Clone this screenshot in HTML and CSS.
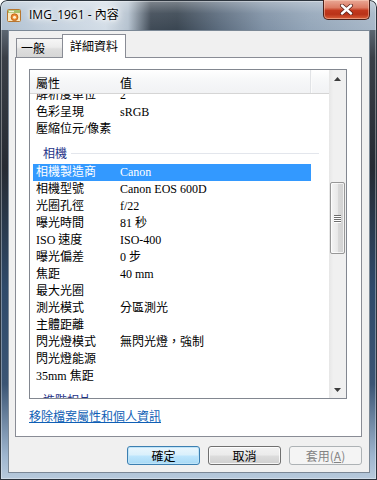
FILE: index.html
```html
<!DOCTYPE html>
<html>
<head>
<meta charset="utf-8">
<link rel="stylesheet" href="styles.css">
</head>
<body>
<div class="window">
  <div class="titlebar">
    <svg class="app-icon" width="16" height="16" viewBox="0 0 16 16">
      <rect x="1.5" y="2.5" width="13" height="12" rx="1" fill="#fbe9bf" stroke="#b7762f"/>
      <rect x="2" y="3" width="12" height="3" fill="#a9c06c"/>
      <rect x="3" y="3.8" width="5" height="1.4" fill="#f4f0d8"/>
      <circle cx="8.5" cy="10.2" r="3.4" fill="#ec8a2e" stroke="#b65a14" stroke-width="0.8"/>
      <circle cx="8.5" cy="10.2" r="1.5" fill="#fff2d2"/>
    </svg>
    <span class="title">IMG_1961 - 內容</span>
    <div class="close">
      <svg width="15" height="11" viewBox="0 0 15 11">
        <path d="M3 1.5 L12 9.5 M12 1.5 L3 9.5" stroke="#5a2219" stroke-width="4" stroke-linecap="round"/>
        <path d="M3 1.5 L12 9.5 M12 1.5 L3 9.5" stroke="#ffffff" stroke-width="2.4" stroke-linecap="round"/>
      </svg>
    </div>
  </div>
  <div class="client">
    <div class="tabs">
      <div class="tab">一般</div>
      <div class="tab tab-active">詳細資料</div>
    </div>
    <div class="panel">
      <div class="listview">
        <div class="lv-main">
          <div class="lv-header">
            <div class="hcol hcol-name">屬性</div>
            <div class="hcol hcol-value">值</div>
            <div class="hcol hcol-rest"></div>
          </div>
          <div class="lv-body">
            <div class="lv-rows">
              <div class="row"><span class="c-name">解析度單位</span><span class="c-val">2</span></div>
              <div class="row"><span class="c-name">色彩呈現</span><span class="c-val">sRGB</span></div>
              <div class="row"><span class="c-name">壓縮位元/像素</span><span class="c-val"></span></div>
              <div class="group"><span class="group-label">相機</span><span class="group-line"></span></div>
              <div class="row row-selected"><span class="c-name">相機製造商</span><span class="c-val">Canon</span></div>
              <div class="row"><span class="c-name">相機型號</span><span class="c-val">Canon EOS 600D</span></div>
              <div class="row"><span class="c-name">光圈孔徑</span><span class="c-val">f/22</span></div>
              <div class="row"><span class="c-name">曝光時間</span><span class="c-val">81 秒</span></div>
              <div class="row"><span class="c-name">ISO 速度</span><span class="c-val">ISO-400</span></div>
              <div class="row"><span class="c-name">曝光偏差</span><span class="c-val">0 步</span></div>
              <div class="row"><span class="c-name">焦距</span><span class="c-val">40 mm</span></div>
              <div class="row"><span class="c-name">最大光圈</span><span class="c-val"></span></div>
              <div class="row"><span class="c-name">測光模式</span><span class="c-val">分區測光</span></div>
              <div class="row"><span class="c-name">主體距離</span><span class="c-val"></span></div>
              <div class="row"><span class="c-name">閃光燈模式</span><span class="c-val">無閃光燈，強制</span></div>
              <div class="row"><span class="c-name">閃光燈能源</span><span class="c-val"></span></div>
              <div class="row"><span class="c-name">35mm 焦距</span><span class="c-val"></span></div>
              <div class="group"><span class="group-label">進階相片</span><span class="group-line"></span></div>
            </div>
          </div>
        </div>
        <div class="scrollbar">
          <div class="sb-btn">
            <svg width="7" height="4" viewBox="0 0 7 4"><path d="M0 4 L3.5 0 L7 4 Z" fill="#3c3c3c"/></svg>
          </div>
          <div class="sb-track">
            <div class="sb-thumb">
              <span class="grip"></span><span class="grip"></span><span class="grip"></span><span class="grip"></span>
            </div>
          </div>
          <div class="sb-btn">
            <svg width="7" height="4" viewBox="0 0 7 4"><path d="M0 0 L7 0 L3.5 4 Z" fill="#3c3c3c"/></svg>
          </div>
        </div>
      </div>
      <a class="link" href="#">移除檔案屬性和個人資訊</a>
    </div>
    <div class="buttons">
      <div class="btn btn-default">確定</div>
      <div class="btn">取消</div>
      <div class="btn btn-disabled">套用(<u>A</u>)</div>
    </div>
  </div>
</div>
</body>
</html>
```

FILE: styles.css
```css
html, body {
  margin: 0;
  padding: 0;
  background: #ffffff;
}

body {
  width: 377px;
  height: 480px;
  overflow: hidden;
  font-family: "Noto Sans CJK TC", "Noto Sans", sans-serif;
  font-size: 12px;
  color: #000;
}

.window {
  width: 377px;
  height: 480px;
  box-sizing: border-box;
  display: flex;
  flex-direction: column;
  border-radius: 7px 7px 0 0;
  overflow: hidden;
  background:
    linear-gradient(180deg, rgba(255,255,255,0.35) 0%, rgba(255,255,255,0.08) 45%, rgba(255,255,255,0) 100%) top left / 100% 30px no-repeat,
    linear-gradient(90deg, #aebfd0 0%, #c3d0dd 12%, #d3dde7 28%, #b5c2cf 34%, #3f4a56 40%, #3a4652 47%, #5b6b7d 58%, #7f91a5 70%, #94a6b9 82%, #a7b7c8 100%) top left / 100% 30px no-repeat,
    linear-gradient(180deg, #8090a0 0%, #3a3f47 12%, #262b33 35%, #2f4a6a 60%, #3b5574 80%, #9fb6cf 95%, #b9cbdd 100%);
  box-shadow: inset 0 0 0 1px #2c343d, inset 0 0 0 2px rgba(255,255,255,0.35);
}

/* Title bar */
.titlebar {
  height: 30px;
  flex: none;
  display: flex;
  align-items: center;
  padding-left: 6px;
}

.app-icon {
  flex: none;
  display: block;
}

.title {
  margin-left: 7px;
  font-family: "Open Sans", "Noto Sans CJK TC", sans-serif;
  font-size: 12px;
  line-height: 16px;
  color: #000;
  text-shadow: 0 0 6px #fff, 0 0 3px #fff, 0 0 10px #fff;
}

.close {
  margin-left: auto;
  margin-right: 7px;
  align-self: flex-start;
  width: 47px;
  height: 20px;
  box-sizing: border-box;
  border: 1px solid #4a2019;
  border-top: none;
  border-radius: 0 0 5px 5px;
  background: linear-gradient(180deg, #e9a896 0%, #dc7c64 40%, #c2391e 55%, #b93218 75%, #d9603a 100%);
  box-shadow: inset 0 0 0 1px rgba(255,220,200,0.45);
  display: flex;
  align-items: center;
  justify-content: center;
}

.close svg {
  display: block;
}

/* Client area */
.client {
  flex: none;
  height: 443px;
  margin: 0 7px 0 8px;
  box-sizing: border-box;
  border: 1px solid #7b8896;
  background: #f0f0f0;
  padding: 3px 7px 0 6px;
  display: flex;
  flex-direction: column;
}

.tabs {
  height: 23px;
  flex: none;
  display: flex;
  align-items: flex-end;
}

.tab {
  box-sizing: border-box;
  height: 19px;
  width: 47px;
  margin-left: 1px;
  padding-left: 4px;
  border: 1px solid #898c95;
  border-bottom: none;
  background: linear-gradient(180deg, #f6f6f6 0%, #ececec 45%, #dedede 55%, #d6d6d6 100%);
  font-size: 12px;
  line-height: 18px;
  white-space: nowrap;
}

.tab-active {
  position: relative;
  z-index: 1;
  height: 24px;
  width: 64px;
  margin-left: -1px;
  margin-bottom: -1px;
  padding-left: 7px;
  background: #ffffff;
  line-height: 22px;
}

.panel {
  flex: none;
  width: 347px;
  height: 380px;
  box-sizing: border-box;
  border: 1px solid #898c95;
  background: #ffffff;
  padding: 11px 0 0 13px;
  display: flex;
  flex-direction: column;
}

/* List view */
.listview {
  width: 318px;
  height: 330px;
  box-sizing: border-box;
  border: 1px solid #828790;
  display: flex;
  flex: none;
}

.lv-main {
  flex: 1;
  min-width: 0;
  display: flex;
  flex-direction: column;
}

.lv-header {
  height: 24px;
  flex: none;
  box-sizing: border-box;
  border-bottom: 1px solid #d5d5d5;
  background: linear-gradient(180deg, #ffffff 0%, #f7f8f9 40%, #f1f2f4 100%);
  display: flex;
}

.hcol {
  box-sizing: border-box;
  padding-top: 4px;
  line-height: 18px;
  font-size: 12px;
}

.hcol-name {
  width: 90px;
  padding-left: 6px;
}

.hcol-value {
  width: 191px;
  border-right: 1px solid #e1e3e6;
  box-shadow: 1px 0 0 #fbfbfb;
}

.hcol-rest {
  flex: 1;
}

.lv-body {
  flex: 1;
  overflow: hidden;
}

.lv-rows {
  margin-top: -7px;
}

.row {
  height: 17px;
  width: 278px;
  margin-left: 3px;
  padding-left: 3px;
  box-sizing: border-box;
  display: flex;
  font-family: "Liberation Serif", "Noto Sans CJK TC", serif;
  font-size: 12px;
  line-height: 17px;
  white-space: nowrap;
}

.c-name {
  width: 84px;
  flex: none;
  overflow: hidden;
}

.c-val {
  flex: 1;
}

.row-selected {
  background: #3399ff;
  color: #ffffff;
}

.group {
  height: 26px;
  box-sizing: border-box;
  padding: 4px 10px 0 13px;
  display: flex;
  align-items: center;
}

.group-label {
  color: #1e3287;
  font-size: 12px;
  line-height: 16px;
  white-space: nowrap;
}

.group-line {
  flex: 1;
  height: 1px;
  margin-left: 4px;
  background: #e3e6ec;
}

/* Scrollbar */
.scrollbar {
  width: 17px;
  flex: none;
  display: flex;
  flex-direction: column;
  background: linear-gradient(90deg, #e6e6e6 0%, #f0f0f0 25%, #f0f0f0 100%);
}

.sb-btn {
  height: 17px;
  flex: none;
  display: flex;
  align-items: center;
  justify-content: center;
}

.sb-btn svg {
  display: block;
}

.sb-track {
  flex: 1;
  padding-top: 95px;
}

.sb-thumb {
  width: 15px;
  height: 72px;
  margin-left: 1px;
  box-sizing: border-box;
  border: 1px solid #979797;
  border-radius: 2px;
  background: linear-gradient(90deg, #f4f4f4 0%, #e8e8e8 50%, #d9d9d9 51%, #d2d2d2 100%);
  box-shadow: inset 0 0 0 1px rgba(255,255,255,0.7);
  display: flex;
  flex-direction: column;
  align-items: center;
  justify-content: center;
  gap: 1px;
}

.grip {
  display: block;
  width: 7px;
  height: 1px;
  background: #6d6d6d;
  box-shadow: 0 1px 0 #ffffff;
}

/* Link */
.link {
  margin-top: 8px;
  align-self: flex-start;
  color: #0f5fb5;
  text-decoration: underline;
  font-size: 12px;
  line-height: 17px;
}

/* Buttons */
.buttons {
  margin-top: 9px;
  display: flex;
  justify-content: flex-end;
  gap: 8px;
  width: 347px;
}

.btn {
  width: 73px;
  height: 19px;
  box-sizing: border-box;
  border: 1px solid #707070;
  border-radius: 3px;
  background: linear-gradient(180deg, #f2f2f2 0%, #ebebeb 48%, #dddddd 52%, #cfcfcf 100%);
  box-shadow: inset 0 0 0 1px rgba(255,255,255,0.8);
  display: flex;
  align-items: center;
  justify-content: center;
  font-size: 12px;
  line-height: 17px;
  white-space: nowrap;
}

.btn-default {
  border-color: #3c7fb1;
  background: linear-gradient(180deg, #eaf6fd 0%, #d9f0fc 48%, #bee6fd 52%, #a7d9f5 100%);
  box-shadow: inset 0 0 0 1px #bfe4f8;
}

.btn-disabled {
  border-color: #adb2b5;
  background: #f4f4f4;
  box-shadow: none;
  color: #838383;
}

.btn-disabled u {
  text-decoration: underline;
}
```
